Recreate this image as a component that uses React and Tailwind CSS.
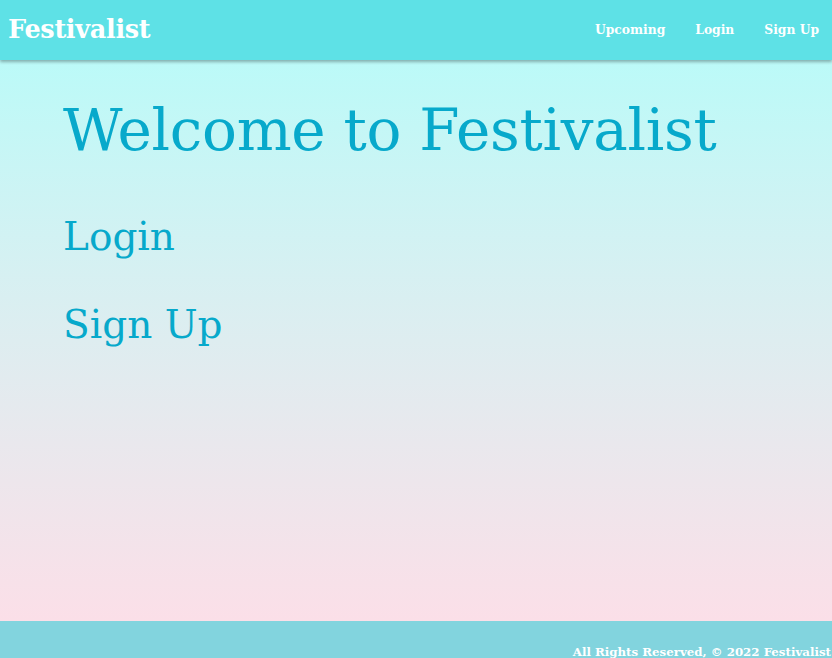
export default function App() {
  const font = { fontFamily: '"DejaVu Serif", "Liberation Serif", serif' };
  return (
    <div className="w-[832px] h-[658px] overflow-hidden flex flex-col" style={font}>
      <header className="h-[60px] shrink-0 bg-[#5ee1e6] shadow-[0_2px_3px_rgba(0,0,0,0.3)] relative z-10 flex items-center justify-between pl-[8px] pr-[13px]">
        <div className="text-white text-[25.5px] font-bold tracking-[-0.3px] pb-[2px]">Festivalist</div>
        <nav className="flex items-center gap-[30px] text-white text-[12.3px] font-bold">
          <span>Upcoming</span>
          <span>Login</span>
          <span>Sign Up</span>
        </nav>
      </header>
      <main className="flex-1 bg-gradient-to-b from-[#bbfaf8] to-[#fbdfe8] pl-[63px] pt-[32px]">
        <h1 className="text-[#07a9cb] text-[58px] leading-[76px] tracking-[-0.3px]">Welcome to Festivalist</h1>
        <div className="mt-[41px] text-[#07a9cb] text-[39px] leading-[56px]">Login</div>
        <div className="mt-[32px] text-[#07a9cb] text-[39px] leading-[56px]">Sign Up</div>
      </main>
      <footer className="h-[37px] shrink-0 bg-[#82d4de] flex justify-end items-end">
        <div className="text-white text-[11.8px] font-bold leading-none translate-y-[1px] whitespace-nowrap pr-[1px]">All Rights Reserved, © 2022 Festivalist</div>
      </footer>
    </div>
  );
}
